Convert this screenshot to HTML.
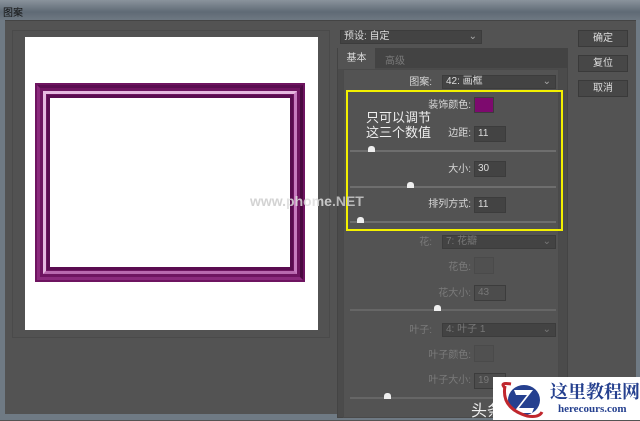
<!DOCTYPE html>
<html><head><meta charset="utf-8"><style>
*{margin:0;padding:0;box-sizing:border-box}
body{width:640px;height:420px;overflow:hidden;background:#535353;font-family:"Liberation Sans","Noto Sans CJK SC",sans-serif;font-size:11px;color:#ddd;position:relative}
.a{position:absolute}
.t{color:#d8d8d8;font-size:10px;right:169px;text-align:right;white-space:nowrap;line-height:12px}
.dim{color:#7a7a7a}
.in{background:#434343;border:1px solid #3c3c3c;color:#ddd;font-size:10px;padding-left:3px;line-height:14px;height:16px}
.sl{height:2px;background:#6e6e6e}
.th{width:7px;height:6px;background:#eee;border-radius:3px 3px 0 0}
.btn{background:#474747;border:1px solid #3a3a3a;color:#ddd;font-size:10px;text-align:center;line-height:15px;height:17px;width:50px;left:578px}
</style></head><body>
<div class="a" style="left:0;top:0;width:640px;height:20px;background:linear-gradient(180deg,#8a939c,#5f6a75 60%,#6e7882);"></div>
<div class="a" style="left:3px;top:4px;font-size:10px;color:#111">图案</div>
<div class="a" style="left:0;top:20px;width:5px;height:400px;background:#6f7a84"></div>
<div class="a" style="left:636px;top:20px;width:4px;height:400px;background:#6f7a84"></div>
<div class="a" style="left:0;top:414px;width:640px;height:6px;background:#6f7a84"></div>
<div class="a" style="left:5px;top:20px;width:631px;height:394px;background:#535353;border-top:1px solid #444"></div>
<div class="a" style="left:12px;top:30px;width:318px;height:308px;border:1px solid #4a4a4a;background:#525252"></div>
<div class="a" style="left:25px;top:37px;width:293px;height:293px;background:#fff"></div>
<div class="a" style="left:35px;top:83px;width:270px;height:199px;background:#6e1460"></div>
<div class="a" style="left:37px;top:85px;width:266px;height:195px;border:3px solid #8a2a7c;border-right-color:#4a0a40;border-top-color:#5a0c50"></div>
<div class="a" style="left:43px;top:91px;width:254px;height:183px;border:3px solid #e6b8e0;border-bottom-color:#b868ae;border-right-color:#c87ac0"></div>
<div class="a" style="left:47px;top:95px;width:246px;height:175px;background:#5a0c50"></div>
<div class="a" style="left:50px;top:98px;width:240px;height:169px;background:#fff"></div>

<div class="a in" style="left:340px;top:30px;width:142px;height:14px;line-height:12px;color:#ddd">预设: 自定<span style="float:right;margin-right:4px;color:#aaa">⌄</span></div>
<div class="a" style="left:337px;top:48px;width:231px;height:370px;background:#4b4b4b;border:1px solid #444"></div>
<div class="a" style="left:337px;top:48px;width:231px;height:20px;background:#434343"></div>
<div class="a" style="left:338px;top:48px;width:37px;height:21px;background:#535353;text-align:center;line-height:21px;font-size:10px">基本</div>
<div class="a dim" style="left:385px;top:52px;font-size:10px">高级</div>
<div class="a" style="left:343px;top:69px;width:216px;height:349px;background:#535353;border:1px solid #4a4a4a"></div>

<div class="a t" style="right:208px;top:77px">图案:</div>
<div class="a in" style="left:442px;top:75px;width:114px;height:14px;line-height:12px">42: 画框<span style="float:right;margin-right:4px;color:#aaa">⌄</span></div>

<div class="a" style="left:346px;top:90px;width:217px;height:141px;border:2px solid #f3f000"></div>
<div class="a t" style="top:100px">装饰颜色:</div>
<div class="a" style="left:474px;top:97px;width:20px;height:16px;background:#7d0a6e;border:1px solid #3c3c3c"></div>
<div class="a" style="left:366px;top:110px;font-size:13px;color:#eee;line-height:15px">只可以调节<br>这三个数值</div>
<div class="a t" style="top:128px">边距:</div>
<div class="a in" style="left:474px;top:126px;width:32px">11</div>
<div class="a sl" style="left:350px;top:150px;width:206px"></div>
<div class="a th" style="left:368px;top:146px"></div>
<div class="a t" style="top:164px">大小:</div>
<div class="a in" style="left:474px;top:161px;width:32px">30</div>
<div class="a sl" style="left:350px;top:186px;width:206px"></div>
<div class="a th" style="left:407px;top:182px"></div>
<div class="a t" style="top:199px">排列方式:</div>
<div class="a in" style="left:474px;top:197px;width:32px">11</div>
<div class="a sl" style="left:350px;top:221px;width:206px"></div>
<div class="a th" style="left:357px;top:217px"></div>
<div class="a" style="left:250px;top:193px;font-size:14px;font-weight:bold;color:#ccc;opacity:.85">www.<span style="color:#ddd">phome</span>.NET</div>

<div class="a t dim" style="right:208px;top:237px">花:</div>
<div class="a in dim" style="left:442px;top:235px;width:114px;height:14px;line-height:12px;color:#777">7: 花瓣<span style="float:right;margin-right:4px">⌄</span></div>
<div class="a t dim" style="top:262px">花色:</div>
<div class="a" style="left:474px;top:257px;width:20px;height:17px;border:1px solid #4a4a4a;background:#505050"></div>
<div class="a t dim" style="top:288px">花大小:</div>
<div class="a in" style="left:474px;top:285px;width:32px;color:#777;background:#4c4c4c">43</div>
<div class="a sl" style="left:350px;top:309px;width:206px;background:#666"></div>
<div class="a th" style="left:434px;top:305px"></div>
<div class="a t dim" style="right:208px;top:325px">叶子:</div>
<div class="a in dim" style="left:442px;top:323px;width:114px;height:14px;line-height:12px;color:#777">4: 叶子 1<span style="float:right;margin-right:4px">⌄</span></div>
<div class="a t dim" style="top:350px">叶子颜色:</div>
<div class="a" style="left:474px;top:345px;width:20px;height:17px;border:1px solid #4a4a4a;background:#505050"></div>
<div class="a t dim" style="top:375px">叶子大小:</div>
<div class="a in" style="left:474px;top:373px;width:32px;color:#777;background:#4c4c4c">19</div>
<div class="a sl" style="left:350px;top:397px;width:206px;background:#666"></div>
<div class="a th" style="left:384px;top:393px"></div>
<div class="a" style="left:471px;top:397px;font-size:16px;color:#eee">头条</div>

<div class="a btn" style="top:30px">确定</div>
<div class="a btn" style="top:55px">复位</div>
<div class="a btn" style="top:80px">取消</div>

<div class="a" style="left:493px;top:377px;width:147px;height:43px;background:#fff"></div>
<svg class="a" style="left:497px;top:378px" width="50" height="42" viewBox="0 0 50 42">
<path d="M8 10 Q2 4 14 6" stroke="#c0272d" stroke-width="3" fill="none"/>
<ellipse cx="27" cy="22" rx="16" ry="15" fill="#25408f"/>
<path d="M17 12 H36 L22 30 H37 L35 35 H16 L30 17 H19 Z" fill="#fff"/>
<path d="M8 8 Q4 30 30 38 Q42 40 45 34" stroke="#c0272d" stroke-width="3" fill="none"/>
</svg>
<div class="a" style="left:550px;top:378px;font-size:18px;font-weight:bold;color:#25408f;font-family:'Noto Serif CJK SC',serif">这里教程网</div>
<div class="a" style="left:558px;top:403px;font-size:11px;font-weight:bold;color:#25408f;font-family:'Liberation Serif',serif">herecours.com</div>
</body></html>
